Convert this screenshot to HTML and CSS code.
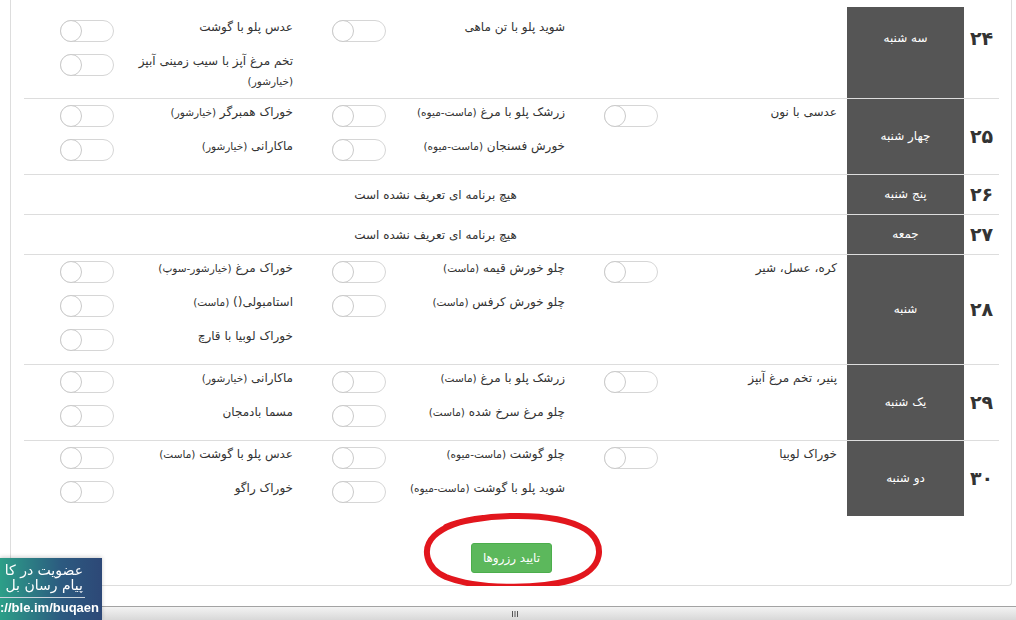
FILE: index.html
```html
<!DOCTYPE html>
<html lang="fa">
<head>
    <meta charset="UTF-8">
    <meta name="viewport" content="width=device-width, initial-scale=1.0">
    <title>رزرو غذا</title>
    <link rel="stylesheet" href="styles.css">
</head>
<body>
<div class="panel">
    <table class="plan" dir="rtl">
        <colgroup>
            <col class="col-num">
            <col class="col-day">
            <col class="col-meal">
            <col class="col-meal">
            <col>
        </colgroup>
        <tr class="first">
            <td class="num">۲۴</td>
            <td class="day">سه شنبه</td>
            <td class="meal"></td>
            <td class="meal">
                <div class="item"><span class="name">شوید پلو با تن ماهی</span><span class="toggle"></span></div>
            </td>
            <td class="meal">
                <div class="item"><span class="name">عدس پلو با گوشت</span><span class="toggle"></span></div>
                <div class="item"><span class="name">تخم مرغ آپز با سیب زمینی آبپز <small>(خیارشور)</small></span><span class="toggle"></span></div>
            </td>
        </tr>
        <tr>
            <td class="num">۲۵</td>
            <td class="day">چهار شنبه</td>
            <td class="meal">
                <div class="item"><span class="name">عدسی با نون</span><span class="toggle"></span></div>
            </td>
            <td class="meal">
                <div class="item"><span class="name">زرشک پلو با مرغ <small>(ماست-میوه)</small></span><span class="toggle"></span></div>
                <div class="item"><span class="name">خورش فسنجان <small>(ماست-میوه)</small></span><span class="toggle"></span></div>
            </td>
            <td class="meal">
                <div class="item"><span class="name">خوراک همبرگر <small>(خیارشور)</small></span><span class="toggle"></span></div>
                <div class="item"><span class="name">ماکارانی <small>(خیارشور)</small></span><span class="toggle"></span></div>
            </td>
        </tr>
        <tr>
            <td class="num">۲۶</td>
            <td class="day">پنج شنبه</td>
            <td class="empty" colspan="3">هیچ برنامه ای تعریف نشده است</td>
        </tr>
        <tr>
            <td class="num">۲۷</td>
            <td class="day">جمعه</td>
            <td class="empty" colspan="3">هیچ برنامه ای تعریف نشده است</td>
        </tr>
        <tr>
            <td class="num">۲۸</td>
            <td class="day">شنبه</td>
            <td class="meal">
                <div class="item"><span class="name">کره، عسل، شیر</span><span class="toggle"></span></div>
            </td>
            <td class="meal">
                <div class="item"><span class="name">چلو خورش قیمه <small>(ماست)</small></span><span class="toggle"></span></div>
                <div class="item"><span class="name">چلو خورش کرفس <small>(ماست)</small></span><span class="toggle"></span></div>
            </td>
            <td class="meal">
                <div class="item"><span class="name">خوراک مرغ <small>(خیارشور-سوپ)</small></span><span class="toggle"></span></div>
                <div class="item"><span class="name">استامبولی() <small>(ماست)</small></span><span class="toggle"></span></div>
                <div class="item"><span class="name">خوراک لوبیا با قارچ</span><span class="toggle"></span></div>
            </td>
        </tr>
        <tr>
            <td class="num">۲۹</td>
            <td class="day">یک شنبه</td>
            <td class="meal">
                <div class="item"><span class="name">پنیر، تخم مرغ آبپز</span><span class="toggle"></span></div>
            </td>
            <td class="meal">
                <div class="item"><span class="name">زرشک پلو با مرغ <small>(ماست)</small></span><span class="toggle"></span></div>
                <div class="item"><span class="name">چلو مرغ سرخ شده <small>(ماست)</small></span><span class="toggle"></span></div>
            </td>
            <td class="meal">
                <div class="item"><span class="name">ماکارانی <small>(خیارشور)</small></span><span class="toggle"></span></div>
                <div class="item"><span class="name">مسما بادمجان</span><span class="toggle"></span></div>
            </td>
        </tr>
        <tr>
            <td class="num">۳۰</td>
            <td class="day">دو شنبه</td>
            <td class="meal">
                <div class="item"><span class="name">خوراک لوبیا</span><span class="toggle"></span></div>
            </td>
            <td class="meal">
                <div class="item"><span class="name">چلو گوشت <small>(ماست-میوه)</small></span><span class="toggle"></span></div>
                <div class="item"><span class="name">شوید پلو با گوشت <small>(ماست-میوه)</small></span><span class="toggle"></span></div>
            </td>
            <td class="meal">
                <div class="item"><span class="name">عدس پلو با گوشت <small>(ماست)</small></span><span class="toggle"></span></div>
                <div class="item"><span class="name">خوراک راگو</span><span class="toggle"></span></div>
            </td>
        </tr>
    </table>

    <div class="actions">
        <button class="btn-confirm" type="submit">تایید رزروها</button>
        <!-- hand drawn mark around the button -->
        <svg class="scribble" width="186" height="82" viewBox="0 0 186 82">
            <path d="M 25 17 C 50 5, 130 -1, 164 19 C 185 32, 184 60, 150 70 C 115 80, 55 79, 25 67 C 4 58, 1 38, 13 26 C 22 17, 40 10, 62 8" fill="none" stroke="#e2161d" stroke-width="6" stroke-linecap="round"/>
        </svg>
    </div>
</div>

<div class="hscroll">
    <svg width="8" height="6" viewBox="0 0 8 6"><path d="M1.5 0v6M4 0v6M6.5 0v6" stroke="#555" stroke-width="1"/></svg>
</div>

<div class="promo" dir="rtl">
    <div class="promo-line">عضویت در کا</div>
    <div class="promo-line promo-sep">پیام رسان بل</div>
    <div class="promo-link"><span dir="ltr">://ble.im/buqaen</span></div>
</div>
</body>
</html>
```

FILE: styles.css
```css
body {
    margin: 0 4px 0 10px;
    font-family: "DejaVu Sans", sans-serif;
    font-size: 12px;
    color: #333;
    background: #fff;
}

.panel {
    border: 1px solid #ddd;
    border-top: 0;
    border-radius: 0 0 4px 4px;
    padding: 7px 12px 12px 13px;
}

.plan {
    width: 100%;
    border-collapse: collapse;
    table-layout: fixed;
}
.col-num {
    width: 35px;
}
.col-day {
    width: 117px;
}
.col-meal {
    width: 272px;
}
.plan td {
    border-top: 1px solid #ddd;
    padding: 3px 10px 4px;
    vertical-align: top;
}
.plan tr.first {
    height: 91px;
}
.plan tr.first td {
    border-top: 0;
    padding-top: 10px;
}

.num {
    text-align: center;
    font-size: 19px;
    font-weight: bold;
    line-height: 28px;
}
.plan td.num,
.plan td.day {
    vertical-align: middle;
    padding: 0;
}
.day {
    background: #555;
    color: #fff;
    text-align: center;
    line-height: 20px;
}
.plan tr.first td.num {
    vertical-align: top;
    padding-top: 17px;
}
.plan tr.first td.day {
    vertical-align: top;
    padding-top: 21px;
}

.plan td.empty {
    text-align: center;
    line-height: 20px;
    padding: 10px 10px 9px;
}

.item {
    display: flex;
    min-height: 34px;
}
.item .name {
    width: 179px;
    line-height: 20px;
    text-align: right;
}
.item small {
    font-size: 10.5px;
}

.toggle {
    display: flex;
    justify-content: flex-end;
    width: 54px;
    height: 22px;
    margin-top: 3px;
    box-sizing: border-box;
    border: 1px solid #d6d6d6;
    border-radius: 11px;
    background: #fff;
}
.toggle::after {
    content: "";
    width: 22px;
    height: 22px;
    margin: -1px;
    box-sizing: border-box;
    border: 1px solid #cacaca;
    border-radius: 50%;
    background: #fff;
}

.actions {
    position: relative;
    text-align: center;
    padding-top: 27px;
}
.btn-confirm {
    font-family: "DejaVu Sans", sans-serif;
    font-size: 12px;
    line-height: 18px;
    padding: 5px 11px;
    color: #fff;
    background: #5cb85c;
    border: 1px solid #4cae4c;
    border-radius: 3px;
    cursor: pointer;
}
.scribble {
    position: absolute;
    left: calc(50% - 91px);
    top: -6px;
    pointer-events: none;
}

.hscroll {
    position: fixed;
    left: 0;
    right: 0;
    bottom: 0;
    height: 13px;
    border-top: 1px solid #a3a3a3;
    background: linear-gradient(#f3f3f3, #d8d8d8);
    display: flex;
    justify-content: center;
    align-items: center;
    padding-left: 14px;
}

.promo {
    position: fixed;
    left: 0;
    bottom: 0;
    width: 102px;
    height: 62px;
    overflow: hidden;
    white-space: nowrap;
    color: #fff;
    background: linear-gradient(90deg, #2c9f88, #2c5a80 60%, #2d4877);
    box-shadow: 0 -1px 4px rgba(0, 0, 0, 0.2);
    z-index: 2;
}
.promo-line {
    font-size: 14px;
    line-height: 15px;
    padding-right: 19px;
}
.promo-line:first-child {
    padding-top: 5px;
}
.promo-sep {
    border-bottom: 1px solid #c9d3dc;
    margin-right: 17px;
    padding-right: 2px;
    padding-bottom: 4px;
}
.promo-link {
    font-family: "Liberation Sans", sans-serif;
    font-size: 13px;
    font-weight: bold;
    line-height: 17px;
    padding: 1px 3px 0 0;
}
```
